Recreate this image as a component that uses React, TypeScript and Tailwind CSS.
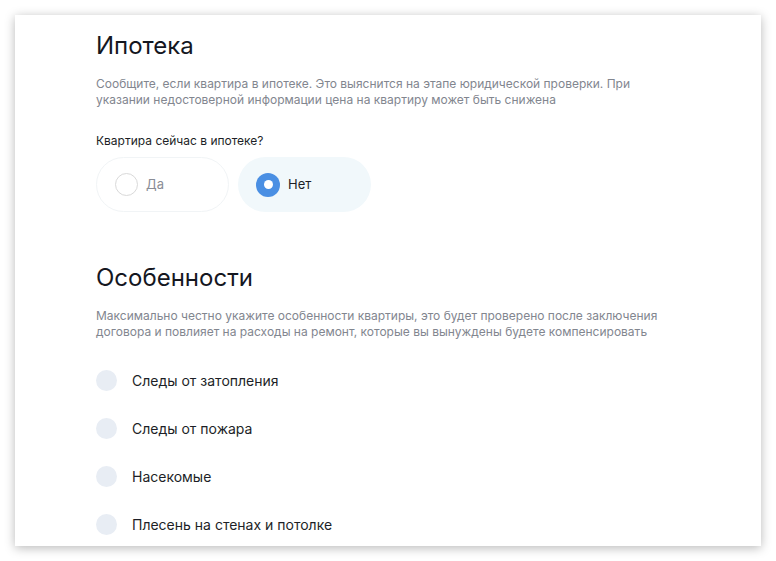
import { useState } from "react";

const FEATURES = [
  "Следы от затопления",
  "Следы от пожара",
  "Насекомые",
  "Плесень на стенах и потолке",
];

export default function App() {
  const [mortgage, setMortgage] = useState<"yes" | "no">("no");
  const [checked, setChecked] = useState<string[]>([]);

  function toggle(name: string) {
    setChecked((c) => (c.includes(name) ? c.filter((x) => x !== name) : [...c, name]));
  }

  return (
    <div className="h-[561px] overflow-hidden bg-white p-[15px] font-['Inter',sans-serif]">
      <div className="h-[531px] overflow-hidden bg-white px-[81px] pt-[15px] shadow-[0_2px_10px_rgba(0,0,0,0.28)]">
        <h2 className="text-[24px] leading-[32px] text-[#15171f]">Ипотека</h2>
        <p className="mt-[14px] max-w-[580px] text-[12px] leading-[16px] text-[#82868f]">
          Сообщите, если квартира в ипотеке. Это выяснится на этапе юридической проверки. При
          указании недостоверной информации цена на квартиру может быть снижена
        </p>

        <div className="mt-[25px] text-[12px] leading-[16px] text-[#1d1f27]">
          Квартира сейчас в ипотеке?
        </div>
        <div className="mt-[8px] flex gap-[9px]">
          <Pill label="Да" on={mortgage === "yes"} onClick={() => setMortgage("yes")} />
          <Pill label="Нет" on={mortgage === "no"} onClick={() => setMortgage("no")} />
        </div>

        <h2 className="mt-[50px] text-[24px] leading-[32px] text-[#15171f]">Особенности</h2>
        <p className="mt-[14px] max-w-[580px] text-[12px] leading-[16px] text-[#82868f]">
          Максимально честно укажите особенности квартиры, это будет проверено после заключения
          договора и повлияет на расходы на ремонт, которые вы вынуждены будете компенсировать
        </p>

        <ul className="mt-[16px]">
          {FEATURES.map((f) => (
            <li key={f}>
              <button
                onClick={() => toggle(f)}
                className="flex h-[48px] items-center gap-[15px] text-[14px] text-[#1d1f27]"
              >
                <span
                  className={`flex h-[21px] w-[21px] items-center justify-center rounded-full ${
                    checked.includes(f) ? "bg-[#4a90e2]" : "bg-[#e8edf4]"
                  }`}
                />
                {f}
              </button>
            </li>
          ))}
        </ul>
      </div>
    </div>
  );
}

function Pill({ label, on, onClick }: { label: string; on: boolean; onClick: () => void }) {
  return (
    <button
      onClick={onClick}
      className={`flex h-[55px] w-[133px] items-center gap-[8px] rounded-full pl-[18px] text-[13px] ${
        on
          ? "bg-[#f1f8fb] text-[#1d1f27]"
          : "border border-[#f1f4f6] bg-white pl-[17px] text-[#8a8d96]"
      }`}
    >
      {on ? (
        <span className="flex h-[24px] w-[24px] items-center justify-center rounded-full bg-[#4a8fe3]">
          <span className="h-[9px] w-[9px] rounded-full bg-white" />
        </span>
      ) : (
        <span className="h-[23px] w-[23px] rounded-full border border-[#d9d9d9] bg-white" />
      )}
      {label}
    </button>
  );
}
